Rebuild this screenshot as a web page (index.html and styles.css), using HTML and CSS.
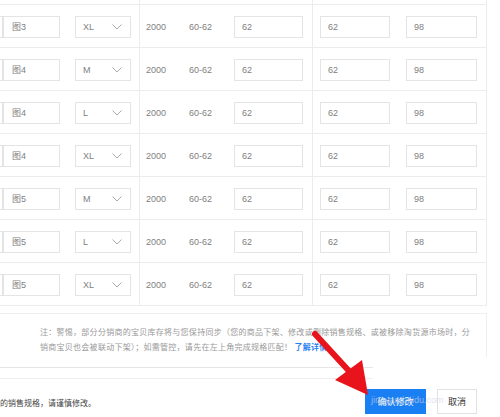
FILE: index.html
```html
<!DOCTYPE html>
<html lang="zh">
<head>
<meta charset="utf-8">
<title>规格</title>
<link rel="stylesheet" href="styles.css">
</head>
<body>
<div class="page">
  <div class="grid">
    <div class="row stub"><div class="g1"></div><div class="g2"></div><div class="g3"></div></div>

    <div class="row">
      <div class="g1"><span class="cut"></span><span class="inp img">图3</span><span class="inp sel">XL<svg class="chev" viewBox="0 0 10 6"><polyline points="0.5,0.5 5,5 9.5,0.5"/></svg></span></div>
      <div class="g2"><span class="num">2000</span><span class="rng">60-62</span><span class="inp w69">62</span></div>
      <div class="g3"><span class="inp w70">62</span><span class="inp w71">98</span></div>
    </div>
    <div class="row">
      <div class="g1"><span class="cut"></span><span class="inp img">图4</span><span class="inp sel">M<svg class="chev" viewBox="0 0 10 6"><polyline points="0.5,0.5 5,5 9.5,0.5"/></svg></span></div>
      <div class="g2"><span class="num">2000</span><span class="rng">60-62</span><span class="inp w69">62</span></div>
      <div class="g3"><span class="inp w70">62</span><span class="inp w71">98</span></div>
    </div>
    <div class="row">
      <div class="g1"><span class="cut"></span><span class="inp img">图4</span><span class="inp sel">L<svg class="chev" viewBox="0 0 10 6"><polyline points="0.5,0.5 5,5 9.5,0.5"/></svg></span></div>
      <div class="g2"><span class="num">2000</span><span class="rng">60-62</span><span class="inp w69">62</span></div>
      <div class="g3"><span class="inp w70">62</span><span class="inp w71">98</span></div>
    </div>
    <div class="row">
      <div class="g1"><span class="cut"></span><span class="inp img">图4</span><span class="inp sel">XL<svg class="chev" viewBox="0 0 10 6"><polyline points="0.5,0.5 5,5 9.5,0.5"/></svg></span></div>
      <div class="g2"><span class="num">2000</span><span class="rng">60-62</span><span class="inp w69">62</span></div>
      <div class="g3"><span class="inp w70">62</span><span class="inp w71">98</span></div>
    </div>
    <div class="row">
      <div class="g1"><span class="cut"></span><span class="inp img">图5</span><span class="inp sel">M<svg class="chev" viewBox="0 0 10 6"><polyline points="0.5,0.5 5,5 9.5,0.5"/></svg></span></div>
      <div class="g2"><span class="num">2000</span><span class="rng">60-62</span><span class="inp w69">62</span></div>
      <div class="g3"><span class="inp w70">62</span><span class="inp w71">98</span></div>
    </div>
    <div class="row">
      <div class="g1"><span class="cut"></span><span class="inp img">图5</span><span class="inp sel">L<svg class="chev" viewBox="0 0 10 6"><polyline points="0.5,0.5 5,5 9.5,0.5"/></svg></span></div>
      <div class="g2"><span class="num">2000</span><span class="rng">60-62</span><span class="inp w69">62</span></div>
      <div class="g3"><span class="inp w70">62</span><span class="inp w71">98</span></div>
    </div>
    <div class="row">
      <div class="g1"><span class="cut"></span><span class="inp img">图5</span><span class="inp sel">XL<svg class="chev" viewBox="0 0 10 6"><polyline points="0.5,0.5 5,5 9.5,0.5"/></svg></span></div>
      <div class="g2"><span class="num">2000</span><span class="rng">60-62</span><span class="inp w69">62</span></div>
      <div class="g3"><span class="inp w70">62</span><span class="inp w71">98</span></div>
    </div>
  </div>

  <div class="note">
    <p class="note-text">注：警惕，部分分销商的宝贝库存将与您保持同步（您的商品下架、修改或删除销售规格、或被移除淘货源市场时，分销商宝贝也会被联动下架）；如需管控，请先在左上角完成规格匹配！<a class="more">了解详情</a></p>
  </div>
  <div class="sep one"></div>
  <div class="sep two"></div>

  <div class="footer">
    <span class="warn">的销售规格，请谨慎修改。</span>
    <span class="btn primary">确认修改</span>
    <span class="btn plain">取消</span>
  </div>

  <div class="watermark">jingyan.baidu.com</div>
  <svg class="arrow" viewBox="0 0 500 417" width="500" height="417">
    <line x1="315" y1="334" x2="349" y2="371" stroke="#e8131b" stroke-width="6" stroke-linecap="round"/>
    <polygon points="335,380 362,360 368,395" fill="#e8131b"/>
  </svg>
</div>
</body>
</html>
```

FILE: styles.css
```css
* { box-sizing: border-box; }

body {
  margin: 0;
  background: #fff;
  font-family: "Liberation Sans", "Noto Sans CJK SC", sans-serif;
}

.page {
  position: relative;
  width: 500px;
  height: 417px;
  overflow: hidden;
}

.grid {
  width: 487px;
}

.row {
  display: flex;
  height: 43px;
  border-bottom: 1px solid #ececec;
}

.row.stub {
  height: 5px;
}

.g1, .g2, .g3 {
  display: flex;
  align-items: center;
  border-right: 1px solid #ececec;
  padding-top: 1px;
}

.g1 { width: 140px; }
.g2 { width: 173px; padding-left: 6px; }
.g3 { width: 174px; padding-left: 7px; }

.cut {
  width: 3px;
  height: 22px;
  border: 1px solid #e4e4e4;
  border-left: none;
}

.inp {
  display: flex;
  align-items: center;
  height: 22px;
  border: 1px solid #e4e4e4;
  padding-left: 7px;
  font-size: 9px;
  color: #808080;
}

.img { width: 57px; padding-left: 8px; }
.sel { width: 56px; margin-left: 15px; justify-content: space-between; padding-right: 8px; }
.w69 { width: 69px; }
.w70 { width: 70px; }
.w71 { width: 71px; margin-left: 16px; }

.chev {
  width: 10px;
  height: 6px;
  fill: none;
  stroke: #aaa;
  stroke-width: 1;
}

.num { width: 43px; font-size: 9px; color: #808080; }
.rng { width: 45px; font-size: 9px; color: #808080; }

.note {
  margin-top: 7px;
  width: 487px;
  height: 44px;
  border-top: 1px solid #eee;
  border-right: 1px solid #eee;
  padding: 11px 0 0 40px;
}

.note-text {
  margin: 0;
  width: 434px;
  font-size: 8px;
  line-height: 15px;
  letter-spacing: 0.27px;
  color: #999;
}

.more {
  color: #2a7ff0;
  font-weight: bold;
  margin-left: 2px;
}

.sep {
  width: 373px;
  height: 1px;
  margin-top: 10px;
}
.sep.one { background: #e6e6e6; }
.sep.two { background: #eeeeee; }

.footer {
  display: flex;
  align-items: center;
  height: 38px;
  padding: 10px 23px 3px 0;
}

.warn {
  flex: 1;
  font-size: 8px;
  color: #444;
  padding-top: 2px;
}

.btn {
  display: flex;
  align-items: center;
  justify-content: center;
  height: 25px;
  font-size: 9px;
}

.primary {
  width: 61px;
  background: #1a7ff2;
  color: #fff;
  margin-right: 11px;
}

.plain {
  width: 40px;
  border: 1px solid #e2e2e2;
  color: #333;
}

.watermark {
  position: absolute;
  left: 371px;
  top: 395px;
  font-size: 9px;
  color: rgba(205, 210, 225, 0.7);
}

.arrow {
  position: absolute;
  left: 0;
  top: 0;
  pointer-events: none;
}
```
